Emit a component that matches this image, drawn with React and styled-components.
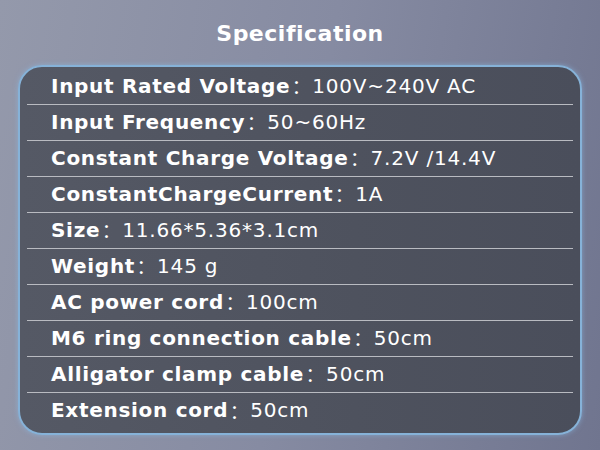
import React from "react";
import styled, {createGlobalStyle} from "styled-components";

const specs = [
    ["Input Rated Voltage", "100V~240V AC"],
    ["Input Frequency", "50~60Hz"],
    ["Constant Charge Voltage", "7.2V /14.4V"],
    ["ConstantChargeCurrent", "1A"],
    ["Size", "11.66*5.36*3.1cm"],
    ["Weight", "145 g"],
    ["AC power cord", "100cm"],
    ["M6 ring connection cable", "50cm"],
    ["Alligator clamp cable", "50cm"],
    ["Extension cord", "50cm"],
];

export default function App() {
    return (
        <Page>
            <GlobalStyle/>
            <Title>Specification</Title>
            <Card>
                {specs.map(([label, value], i) => (
                    <Row key={label} last={i === specs.length - 1}>
                        <Label>{label}</Label>
                        <Colon>：</Colon>
                        <Value>{value}</Value>
                    </Row>
                ))}
            </Card>
        </Page>
    );
}

const GlobalStyle = createGlobalStyle`
  html, body {
    margin: 0;
    padding: 0;
  }
`;

const Page = styled.div`
  width: 600px;
  height: 450px;
  box-sizing: border-box;
  overflow: hidden;
  display: flex;
  flex-direction: column;
  background: linear-gradient(100deg, #9499ab 0%, #868ba2 50%, #70758f 100%);
  font-family: "DejaVu Sans", "Noto Sans CJK SC", sans-serif;
  color: #fff;
`;

const Title = styled.h1`
  margin: 0;
  height: 65px;
  display: flex;
  align-items: center;
  justify-content: center;
  padding-top: 2px;
  box-sizing: border-box;
  font-size: 22px;
  font-weight: 700;
  letter-spacing: 0.5px;
`;

const Card = styled.div`
  margin: 0 18px;
  height: 370px;
  box-sizing: border-box;
  padding: 2px 7px 0;
  border-radius: 24px;
  border: 2px solid #86b2d8;
  box-shadow: 0 0 5px rgba(140, 190, 235, 0.55);
  background: linear-gradient(90deg, #555965 0%, #4e525e 60%, #4a4e5b 100%);
`;

const Row = styled.div`
  height: 36px;
  display: flex;
  align-items: center;
  padding: 0 0 2px 24px;
  border-bottom: ${p => p.last ? "none" : "1.5px solid #b9bbc1"};
  box-sizing: border-box;
  white-space: nowrap;
`;

const Label = styled.span`
  font-size: 20px;
  font-weight: 700;
  letter-spacing: 0.7px;
`;

const Colon = styled.span`
  font-family: "Noto Sans CJK SC", sans-serif;
  font-size: 19px;
  width: 22px;
  text-align: center;
`;

const Value = styled.span`
  font-size: 20px;
  font-weight: 400;
  letter-spacing: 0.8px;
`;
